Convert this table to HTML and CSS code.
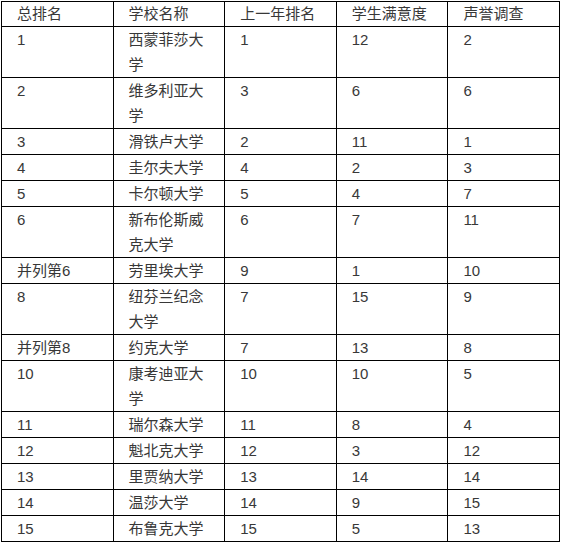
FILE: index.html
```html
<!DOCTYPE html>
<html lang="zh-CN">
<head>
<meta charset="utf-8">
<link rel="stylesheet" href="styles.css">
</head>
<body>
<table class="rank">
<colgroup><col><col><col><col><col></colgroup>
<thead>
<tr><th>总排名</th><th>学校名称</th><th>上一年排名</th><th>学生满意度</th><th>声誉调查</th></tr>
</thead>
<tbody>
<tr><td>1</td><td>西蒙菲莎大学</td><td>1</td><td>12</td><td>2</td></tr>
<tr><td>2</td><td>维多利亚大学</td><td>3</td><td>6</td><td>6</td></tr>
<tr><td>3</td><td>滑铁卢大学</td><td>2</td><td>11</td><td>1</td></tr>
<tr><td>4</td><td>圭尔夫大学</td><td>4</td><td>2</td><td>3</td></tr>
<tr><td>5</td><td>卡尔顿大学</td><td>5</td><td>4</td><td>7</td></tr>
<tr><td>6</td><td>新布伦斯威克大学</td><td>6</td><td>7</td><td>11</td></tr>
<tr><td>并列第6</td><td>劳里埃大学</td><td>9</td><td>1</td><td>10</td></tr>
<tr><td>8</td><td>纽芬兰纪念大学</td><td>7</td><td>15</td><td>9</td></tr>
<tr><td>并列第8</td><td>约克大学</td><td>7</td><td>13</td><td>8</td></tr>
<tr><td>10</td><td>康考迪亚大学</td><td>10</td><td>10</td><td>5</td></tr>
<tr><td>11</td><td>瑞尔森大学</td><td>11</td><td>8</td><td>4</td></tr>
<tr><td>12</td><td>魁北克大学</td><td>12</td><td>3</td><td>12</td></tr>
<tr><td>13</td><td>里贾纳大学</td><td>13</td><td>14</td><td>14</td></tr>
<tr><td>14</td><td>温莎大学</td><td>14</td><td>9</td><td>15</td></tr>
<tr><td>15</td><td>布鲁克大学</td><td>15</td><td>5</td><td>13</td></tr>
</tbody>
</table>
</body>
</html>
```
FILE: styles.css
```css
html, body {
  margin: 0;
  padding: 0;
  background: #fff;
}
body {
  padding: 1px 0 0 1px;
  font-family: "Liberation Sans", "Noto Sans CJK SC", sans-serif;
  font-size: 15px;
  color: #383838;
}
.rank {
  border-collapse: collapse;
  table-layout: fixed;
  width: 559px;
}
.rank col {
  width: 20%;
}
.rank th,
.rank td {
  border: 1px solid #000;
  padding: 0 14px 0 15px;
  text-align: left;
  vertical-align: top;
  font-weight: normal;
  line-height: 25px;
  word-break: break-all;
}
.rank th {
  line-height: 24px;
}
```
